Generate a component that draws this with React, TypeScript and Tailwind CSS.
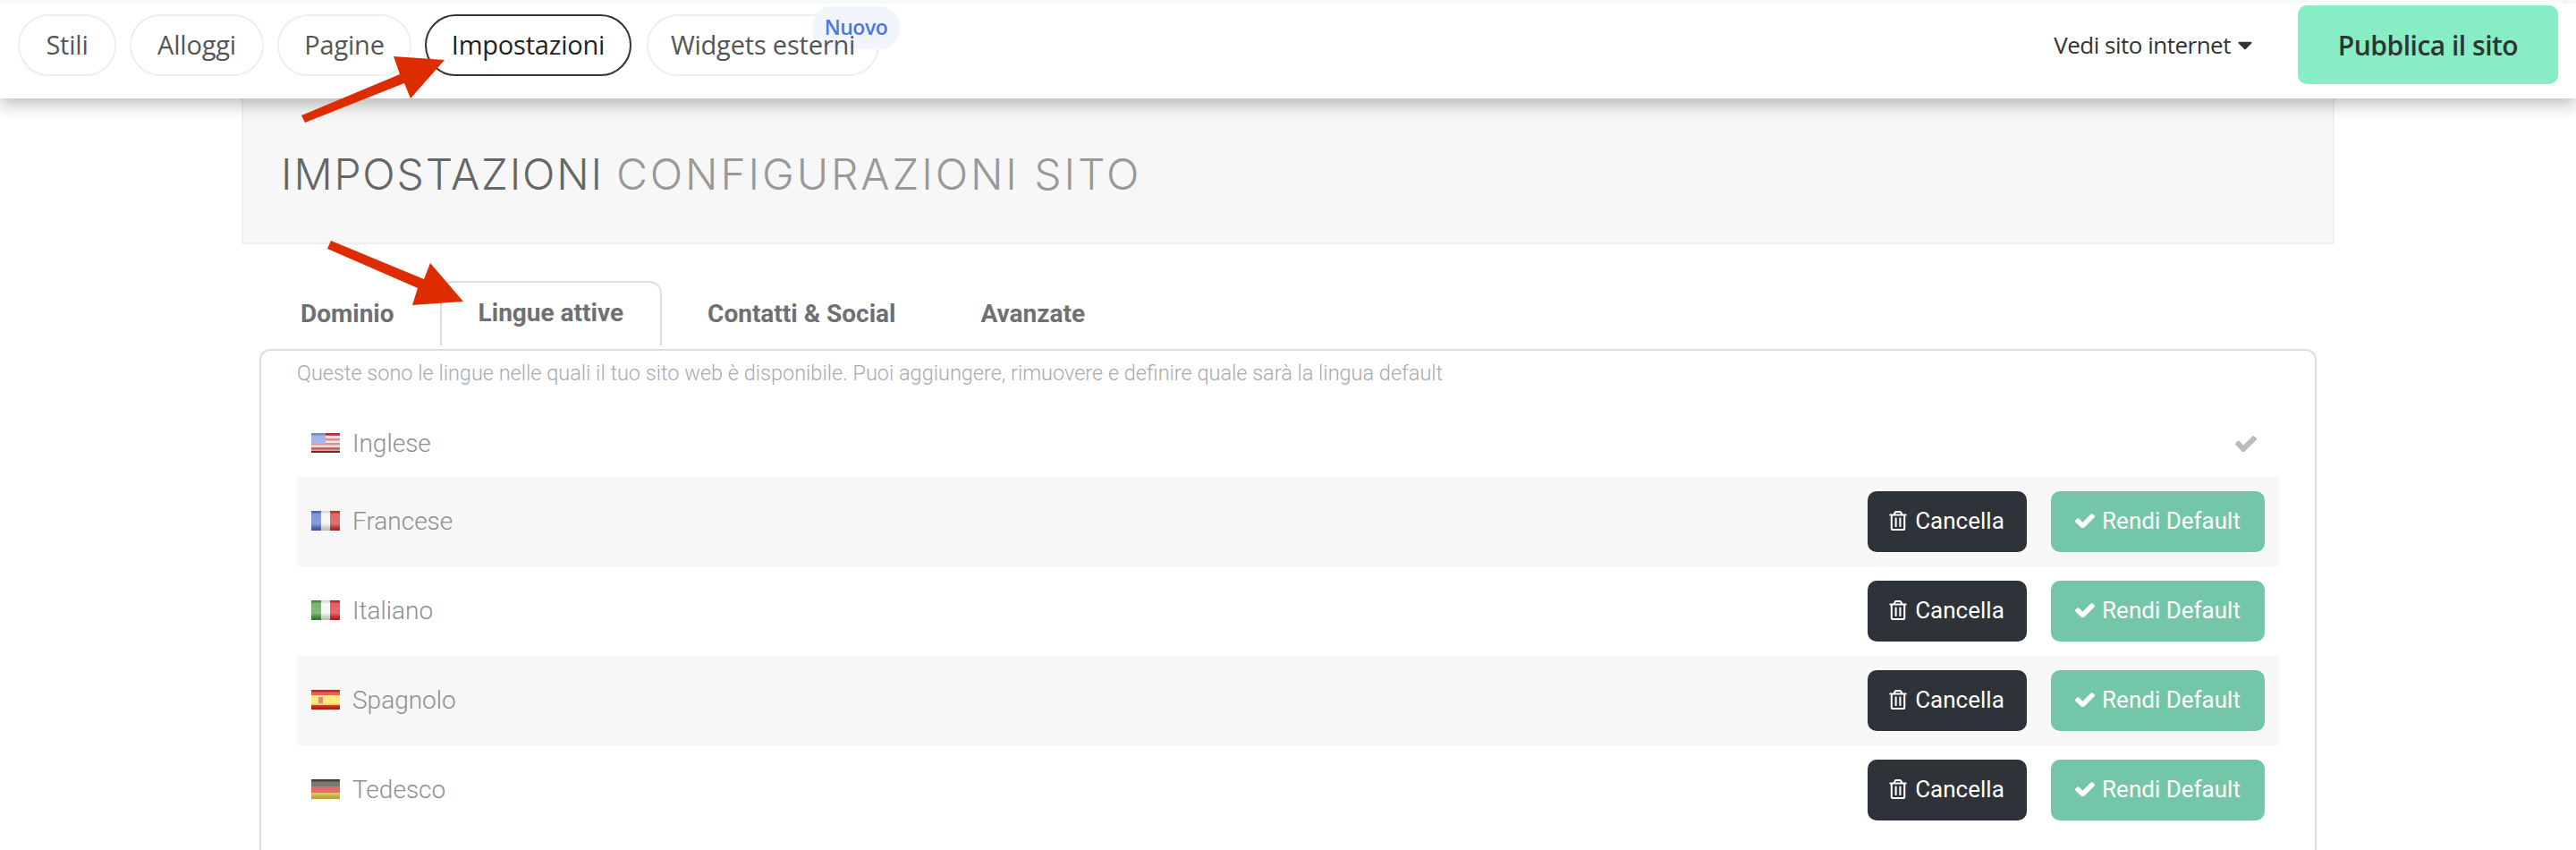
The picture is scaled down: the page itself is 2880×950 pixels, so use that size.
import { FaCaretDown, FaRegTrashAlt } from "react-icons/fa";

const navItems = [
  { label: "Stili", width: "w-[110px]" },
  { label: "Alloggi", width: "w-[150px]" },
  { label: "Pagine", width: "w-[150px]" },
  { label: "Impostazioni", width: "w-[231px]", active: true },
  { label: "Widgets esterni", width: "ml-[2px] w-[260px]" },
];

const tabs = [
  { label: "Dominio" },
  { label: "Lingue attive", active: true },
  { label: "Contatti & Social" },
  { label: "Avanzate" },
];

function CheckIcon({ className }: { className: string }) {
  return (
    <svg viewBox="121 334 1550 1188" fill="currentColor" className={className}>
      <path d="M1671 566q0 40-28 68l-724 724-136 136q-28 28-68 28t-68-28l-136-136-362-362q-28-28-28-68t28-68l136-136q28-28 68-28t68 28l294 295 656-657q28-28 68-28t68 28l136 136q28 28 28 68z" />
    </svg>
  );
}

function Gloss({ id }: { id: string }) {
  return (
    <>
      <defs>
        <linearGradient id={id} x1="0" y1="0" x2="0" y2="1">
          <stop offset="0" stopColor="#000" stopOpacity="0.08" />
          <stop offset="0.15" stopColor="#fff" stopOpacity="0.3" />
          <stop offset="0.65" stopColor="#fff" stopOpacity="0.35" />
          <stop offset="1" stopColor="#000" stopOpacity="0.22" />
        </linearGradient>
      </defs>
      <rect width="32" height="22" fill={`url(#${id})`} />
    </>
  );
}

function Flag({ code }: { code: string }) {
  return (
    <svg width="32" height="22" viewBox="0 0 32 22" className="-mt-[2px] shrink-0">
      {code === "us" && (
        <>
          <rect width="32" height="22" fill="#d8d8e0" />
          <rect y="0" width="32" height="3" fill="#c22b2b" />
          <rect y="6" width="32" height="2.5" fill="#d05a5a" />
          <rect y="11" width="32" height="2.5" fill="#d05a5a" />
          <rect y="16" width="32" height="2.5" fill="#c94a4a" />
          <rect y="20" width="32" height="2" fill="#b01818" />
          <rect width="16" height="12" fill="#7d93d6" />
        </>
      )}
      {code === "fr" && (
        <>
          <rect width="11" height="22" fill="#4a68c4" />
          <rect x="11" width="10" height="22" fill="#f2f2f2" />
          <rect x="21" width="11" height="22" fill="#cf2a22" />
        </>
      )}
      {code === "it" && (
        <>
          <rect width="11" height="22" fill="#3f9338" />
          <rect x="11" width="10" height="22" fill="#f2f2f2" />
          <rect x="21" width="11" height="22" fill="#d91a1a" />
        </>
      )}
      {code === "es" && (
        <>
          <rect width="32" height="22" fill="#d81f12" />
          <rect y="6" width="32" height="11" fill="#f6e13a" />
          <rect x="8" y="8" width="5" height="7" fill="#c8503a" />
        </>
      )}
      {code === "de" && (
        <>
          <rect width="32" height="8" fill="#3d3d33" />
          <rect y="8" width="32" height="7" fill="#d62020" />
          <rect y="15" width="32" height="7" fill="#e8c93a" />
        </>
      )}
      <Gloss id={`gloss-${code}`} />
    </svg>
  );
}

function LanguageRow({
  code,
  label,
  isDefault,
  striped,
}: {
  code: string;
  label: string;
  isDefault?: boolean;
  striped?: boolean;
}) {
  return (
    <div
      className={`flex items-center pl-4 pr-4 ${isDefault ? "h-[74px]" : "h-[100px]"} ${striped ? "bg-[#f7f7f7]" : ""}`}
    >
      <Flag code={code} />
      <span className="ml-[14px] text-[28px] font-light text-[#8f8f8f]">{label}</span>
      <div className="ml-auto flex items-center gap-[27px]">
        {isDefault ? (
          <CheckIcon className="mr-[9px] w-[24px] text-[#b8bbbf]" />
        ) : (
          <>
            <button className="flex h-[68px] w-[178px] items-center justify-center gap-[8px] rounded-[10px] bg-[#2e3239] pb-[2px] pr-[2px] text-[26px] text-white">
              <FaRegTrashAlt className="text-[22px]" />
              Cancella
            </button>
            <button className="flex h-[68px] w-[239px] items-center justify-center gap-[8px] rounded-[10px] bg-[#73c7a8] pb-[2px] text-[26px] text-white">
              <CheckIcon className="w-[22px]" />
              Rendi Default
            </button>
          </>
        )}
      </div>
    </div>
  );
}

export default function App() {
  return (
    <div className="relative h-[950px] w-full overflow-hidden bg-white font-['Roboto',sans-serif]">
      <div className="relative z-20 h-1 w-[2866px] bg-[#f6faf8]" />
      <nav className="relative z-10 flex h-[106px] items-center bg-white pb-[14px] pl-5 pr-5 font-['Open_Sans',sans-serif] shadow-[0_6px_18px_rgba(0,0,0,0.28)]">
        <div className="flex items-center gap-[15px]">
          {navItems.map((item) => (
            <div
              key={item.label}
              className={`relative flex h-[69px] items-center justify-center rounded-full border-2 text-[29px] tracking-[-0.2px] ${item.width} ${
                item.active ? "border-[#333] text-[#222]" : "border-[#eee] text-[#555]"
              }`}
            >
              <span className="relative z-10">{item.label}</span>
              {item.label === "Widgets esterni" && (
                <span className="absolute right-[-25px] top-[-11px] flex h-[48px] w-[98px] items-center justify-center rounded-[22px] bg-[#f3f5fc] text-[23px] font-semibold tracking-[-0.5px] text-[#4a78ea]">
                  Nuovo
                </span>
              )}
            </div>
          ))}
        </div>
        <div className="ml-auto flex items-center gap-[3px] text-[26px] tracking-[-0.5px] text-[#333]">
          Vedi sito internet
          <FaCaretDown className="text-[26px]" />
        </div>
        <button className="ml-[46px] h-[88px] w-[291px] rounded-[10px] bg-[#86edc4] text-[30px] font-semibold tracking-[-0.5px] text-[#333]">
          Pubblica il sito
        </button>
      </nav>

      <main className="mx-auto w-[2340px]">
        <header className="flex h-[163px] items-center border-x-2 border-b-2 border-[#eee] bg-[#f7f7f7] pl-[42px] pt-[8px] font-['Inter',sans-serif] text-[48px] font-light">
          <span className="tracking-[1.8px] text-[#666]">IMPOSTAZIONI</span>
          <span className="ml-[14px] tracking-[2.9px] text-[#999]">CONFIGURAZIONI SITO</span>
        </header>

        <div className="ml-[22px] mt-[41px] flex h-[72px] items-stretch gap-[7px]">
          {tabs.map((tab) => (
            <div
              key={tab.label}
              className={`flex items-center justify-center text-[28px] font-bold text-[#6f7075] ${
                tab.active
                  ? "rounded-t-[14px] border-x-2 border-t-2 border-[#ddd] px-[41px] pb-[2px]"
                  : "px-[44px] pt-[2px]"
              }`}
            >
              {tab.label}
            </div>
          ))}
        </div>

        <section className="mx-5 mt-[4px] h-[700px] rounded-[12px] border-2 border-[#ddd] px-10">
          <p className="pt-[10px] text-[23.5px] font-light leading-[30px] text-[#aaa]">
            Queste sono le lingue nelle quali il tuo sito web è disponibile. Puoi aggiungere, rimuovere e definire quale sarà la lingua default
          </p>
          <div className="mt-[27px]">
            <LanguageRow code="us" label="Inglese" isDefault />
            <LanguageRow code="fr" label="Francese" striped />
            <LanguageRow code="it" label="Italiano" />
            <LanguageRow code="es" label="Spagnolo" striped />
            <LanguageRow code="de" label="Tedesco" />
          </div>
        </section>
      </main>

      <svg className="pointer-events-none absolute left-0 top-0 z-30" width="600" height="360">
        <polygon fill="#dd2c00" points="337,129 447,83 440,63 497,67 459,110 452,93 341,137" />
        <polygon fill="#dd2c00" points="370,269 474,312 481,294 518,337 461,341 467,322 366,278" />
      </svg>
    </div>
  );
}
